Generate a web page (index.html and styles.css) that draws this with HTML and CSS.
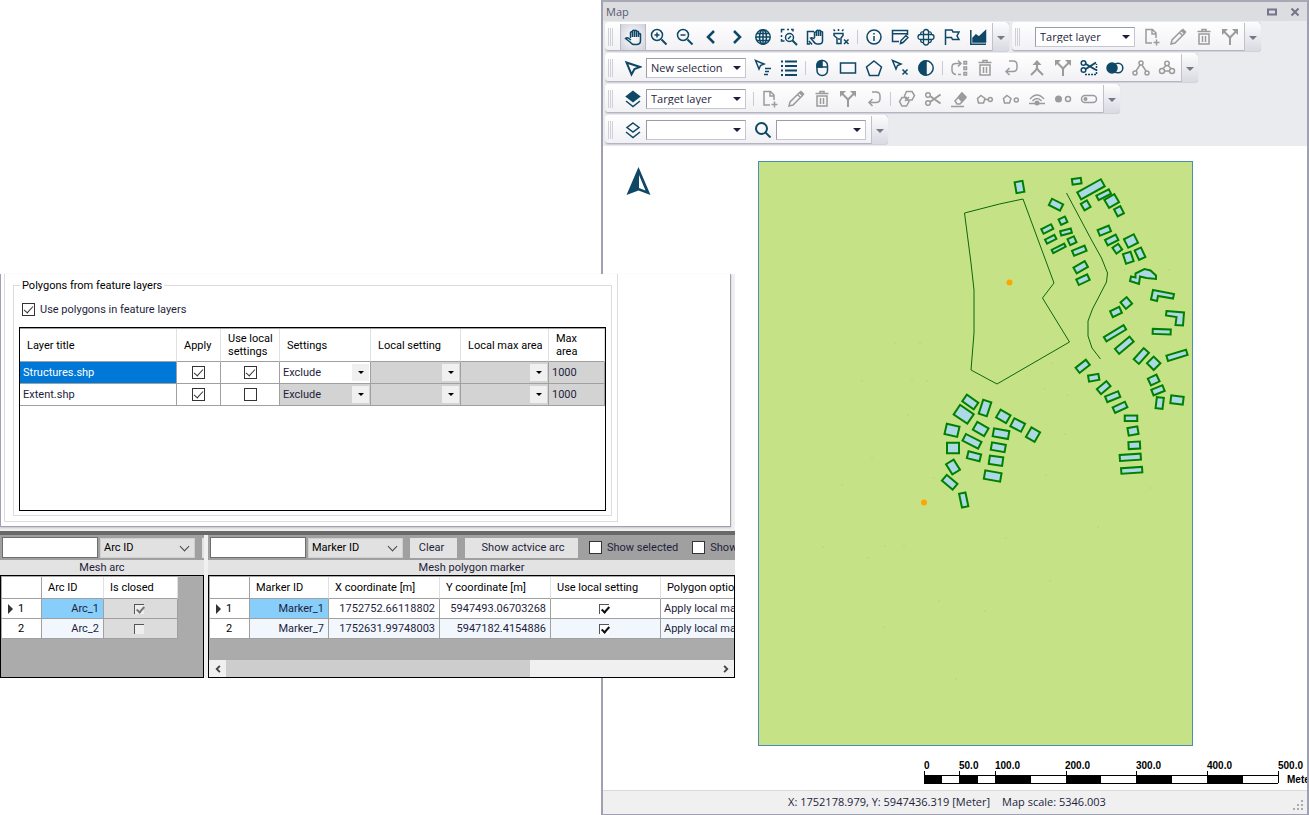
FILE: index.html
```html
<!DOCTYPE html>
<html lang="en">
<head>
<meta charset="utf-8">
<title>Map</title>
<link rel="stylesheet" href="styles.css">
</head>
<body>
<svg class="symbols" aria-hidden="true">
  <symbol id="hand" viewBox="0 0 18 18"><path d="M6.500 10V4.500q1-1.500 2 0V3q1-1.500 2 0q1-1.500 2 0v1q1-1.500 2 0V6q1.500-1 2 0v6.500q0 4-4 4h-2.500q-2 0-4-2.500L1.500 10.500q1-1 2.500-.5l3 2M8.500 4v5M10.500 3v6M12.500 4v5M14.500 6v3"/></symbol>
  <symbol id="zoomin" viewBox="0 0 18 18"><circle cx="7" cy="7" r="5.500"/><path d="M4.500 7h5M7 4.500v5"/><path class="thick" d="M11.500 11.500l5 5"/></symbol>
  <symbol id="zoomout" viewBox="0 0 18 18"><circle cx="7" cy="7" r="5.500"/><path d="M4.500 7h5"/><path class="thick" d="M11.500 11.500l5 5"/></symbol>
  <symbol id="prev" viewBox="0 0 18 18"><path class="bold" d="M12 3L6 9l6 6"/></symbol>
  <symbol id="next" viewBox="0 0 18 18"><path class="bold" d="M6 3l6 6-6 6"/></symbol>
  <symbol id="globe" viewBox="0 0 18 18"><circle cx="9" cy="9" r="7.200"/><ellipse cx="9" cy="9" rx="3.500" ry="7.200"/><path d="M9 2v14M2 9h14M3 5.500h12M3 12.500h12"/></symbol>
  <symbol id="zoomarea" viewBox="0 0 18 18"><path d="M1.500 4.500v-3h3M7 1.500h2M11 1.500h2v2M1.500 7v2M1.500 11v2h3"/><circle cx="9.500" cy="9.500" r="4"/><path d="M8 11l3-3"/><path class="thick" d="M12.500 12.500l4.500 4.500"/></symbol>
  <symbol id="panmap" viewBox="0 0 18 18"><path d="M8 3.500H1.500V16H4M3 13l3 3.500M8.500 10V4.500q1-1 2 0V3q1-1.500 2 0q1-1.500 2 0v1q1-1 2 0V13q0 3-3.500 3H11q-2 0-3.500-2.500L4.500 10q1.500-1 4 1M10.500 4.500V8M12.500 3v5M14.500 4v4"/></symbol>
  <symbol id="flashx" viewBox="0 0 18 18"><path d="M2 5.500h9v2L9 10v5.500H5V10L2 7.500zM7 10v2M6.500 3V1M3 3L1.500 1.500M10 3l1.500-1.500M12 11.500l4.500 4.500M16.500 11.500L12 16"/></symbol>
  <symbol id="info" viewBox="0 0 18 18"><circle cx="9" cy="9" r="7"/><path d="M9 8v5M9 5v1.600"/></symbol>
  <symbol id="formedit" viewBox="0 0 18 18"><path d="M16.500 7V2.500h-15v11H8M1.500 5.800h15M9.500 15.500l.5-3 5-5 2 2-5 5z"/></symbol>
  <symbol id="cluster" viewBox="0 0 18 18"><path class="fine" d="M6.500 4q0-2.500 2.500-2.500T11.500 4q3-1 3 2.500 2.500 0 2.500 2.500t-2.500 2.500q0 3.500-3 3 0 2.500-2.500 2.500t-2.500-2.500q-3 .500-3-3Q1 11.500 1 9t2.500-2.500Q3.500 3 6.500 4zM6.500 4v10.500M11.500 4v10.500M3.500 6.500h11M3.500 11.500h11"/></symbol>
  <symbol id="flag" viewBox="0 0 18 18"><path d="M2.500 17V2h6.500l1 2h6l-2 4 2 3.500H9.500L8.500 9.500h-6"/></symbol>
  <symbol id="chart" viewBox="0 0 18 18"><path d="M1.800 2v14.200H17"/><path class="solid" d="M4 14V10l3-3 3 2 6.500-6V14z"/></symbol>
  <symbol id="newfile" viewBox="0 0 18 18"><path d="M9 15H3V1.500h6.500L13 5v5M9 2v4h4M13.500 11.500v6M10.500 14.500h6"/></symbol>
  <symbol id="pencil" viewBox="0 0 18 18"><path d="M2 16l1-4 9.500-9.500 3 3L6 15zM10.500 4.500l3 3"/><path class="solid" d="M13 2.500l1-1 2.500 2.500-1 1z"/></symbol>
  <symbol id="trash" viewBox="0 0 18 18"><path d="M2.500 3.500h13M7 3V1.500h4V3M4 6h10v10H4zM7.500 8v6M10.500 8v6"/></symbol>
  <symbol id="split" viewBox="0 0 18 18"><path class="thick" d="M9 17v-6q0-1.500-1-2.500L3 3.500M9 11q0-1.500 1-2.500l5-5"/><path class="head" d="M1 1h6L1 7zM17 1h-6l6 6z"/></symbol>
  <symbol id="cursor" viewBox="0 0 18 18"><path class="thick" d="M2.500 3.500L16 8l-5.500 2L7.500 15.500z"/></symbol>
  <symbol id="cursorlist" viewBox="0 0 18 18"><path d="M1.500 1.500L10 5 6.500 6.500 5 10zM11 9.500h6M11 12.500h4M10 15.500h4"/></symbol>
  <symbol id="list" viewBox="0 0 18 18"><path class="thick" d="M1 2.500h2M5 2.500h12M1 7h2M5 7h12M1 11.500h2M5 11.500h12M1 16h2M5 16h12"/></symbol>
  <symbol id="mouse" viewBox="0 0 18 18"><rect x="4" y="1.500" width="10.500" height="15" rx="5"/><path d="M4 8h10.500"/><path class="solid" d="M4 8V6q0-4 5-4.500V8z"/></symbol>
  <symbol id="rect" viewBox="0 0 18 18"><rect x="1.500" y="4" width="15" height="10"/></symbol>
  <symbol id="pentagon" viewBox="0 0 18 18"><path d="M9 2l7.500 6-3 8.500h-9L1.500 8z"/></symbol>
  <symbol id="cursorx" viewBox="0 0 18 18"><path d="M1.500 1.500L10 5 6.500 6.500 5 10zM11.500 10.500l5 5M16.500 10.500l-5 5"/></symbol>
  <symbol id="contrast" viewBox="0 0 18 18"><circle cx="9" cy="9" r="7.200"/><path class="solid" d="M9 2a7 7 0 0 0 0 14z"/></symbol>
  <symbol id="rotatelist" viewBox="0 0 18 18"><path d="M6 15.500q-4-.500-4-4.500V8q0-3.500 4-3.500h5M8 1.500l3 3-3 3M14 2.500h2.500V5H14zM14 8h2.500v2.500H14zM14 13.500h2.500V16H14zM8 15.500h3"/></symbol>
  <symbol id="undo" viewBox="0 0 18 18"><path d="M7 2h4q4 0 4 4v2.500q0 4-4 4H4M7.500 9L4 12.500 7.500 16"/></symbol>
  <symbol id="merge" viewBox="0 0 18 18"><path class="thick" d="M9 3v5q0 2-1.500 3.500L3 16M9 8q0 2 1.500 3.500L15 16"/><path class="head" d="M4.500 6L9 1l4.500 5z"/></symbol>
  <symbol id="scissors" viewBox="0 0 18 18"><circle cx="4" cy="5" r="2.300"/><circle cx="4" cy="13" r="2.300"/><path class="thick" d="M6 6l10.500 7.500M6 12l10.500-7.500"/></symbol>
  <symbol id="clip" viewBox="0 0 18 18"><circle cx="3.500" cy="4" r="2.300"/><circle cx="3.500" cy="11" r="2.300"/><path class="thick" d="M5 4.500l11 6.500M5 10.500l11-7"/><path stroke-dasharray="2 1" d="M5 15.500h11.500V5"/></symbol>
  <symbol id="overlap" viewBox="0 0 18 18"><circle class="solid" cx="6" cy="9" r="5"/><circle cx="12" cy="9" r="4.800"/></symbol>
  <symbol id="nodes" viewBox="0 0 18 18"><circle cx="9" cy="4" r="2"/><circle cx="3" cy="14" r="2"/><circle cx="15" cy="14" r="2"/><path d="M8 6l-4 6M10 6l4 6"/></symbol>
  <symbol id="nodes2" viewBox="0 0 18 18"><circle cx="9" cy="4.500" r="2.200"/><circle cx="4" cy="12" r="2.500"/><circle cx="14" cy="12" r="2.500"/><path d="M8 6.500l-3 3M10 6.500l3 3M6.500 12h5"/></symbol>
  <symbol id="layers" viewBox="0 0 18 18"><path class="solid" d="M9 1.500l6.500 5L9 11.500 2.500 6.500z"/><path d="M2 11l7 5.500 7-5.500"/></symbol>
  <symbol id="layersline" viewBox="0 0 18 18"><path d="M9 2l6 4.500L9 11 3 6.500zM2 11l7 5.500 7-5.500"/></symbol>
  <symbol id="search" viewBox="0 0 18 18"><circle class="thick" cx="7.500" cy="7.500" r="5.500"/><path class="thick" d="M11.500 11.500l5 5"/></symbol>
  <symbol id="link" viewBox="0 0 18 18"><path d="M8.500 1.500h5.500l2.500 4-2.500 4.500H8.500L6.500 6zM4 7.500h4.500l2.500 4-2.500 4.500H4l-2.500-4.500zM7 11l4-4"/></symbol>
  <symbol id="eraser" viewBox="0 0 18 18"><path d="M1 16.500h13M5 11l6-7 4.500 4-5.500 6H7z"/><path class="solid" d="M8.500 7.500l3.500-4.500 4 4-4 4.500z"/></symbol>
  <symbol id="polynode" viewBox="0 0 18 18"><path d="M5 5.500l4 3-1.500 4.500h-5L1.500 8.500zM9 9.500h3"/><circle cx="14.300" cy="9.500" r="2"/></symbol>
  <symbol id="polydot" viewBox="0 0 18 18"><path d="M5 5.500l4 3-1.500 4.500h-5L1.500 8.500z"/><circle cx="14.300" cy="10" r="2"/></symbol>
  <symbol id="radar" viewBox="0 0 18 18"><path d="M1 13.500h16M2 9q7-8 14 0M4.500 11q4.500-5 9 0"/><circle class="head" cx="9" cy="13" r="2.500"/></symbol>
  <symbol id="dots" viewBox="0 0 18 18"><circle class="head" cx="4.500" cy="9" r="3.500"/><circle cx="14" cy="9" r="2.500"/></symbol>
  <symbol id="toggle" viewBox="0 0 18 18"><rect x="1.500" y="5.500" width="15" height="7" rx="3.500"/><circle class="head" cx="5.500" cy="9" r="2"/></symbol>
</svg>

<main class="desktop">
<section class="map-window" aria-label="Map">
  <header class="titlebar">
    <h1>Map</h1>
    <button class="winbtn" aria-label="Maximize"><svg viewBox="0 0 10 10"><path d="M1 2.500h8v5H1z"/></svg></button>
    <button class="winbtn" aria-label="Close"><svg viewBox="0 0 10 10"><path d="M1.500 1.500l7 7M8.500 1.500l-7 7"/></svg></button>
  </header>
  <div class="toolbars">
    <div class="toolrow">
      <div class="toolbar">
        <i class="grip"></i>
        <button class="tool active" aria-label="Pan"><svg><use href="#hand"/></svg></button>
        <button class="tool" aria-label="Zoom in"><svg><use href="#zoomin"/></svg></button>
        <button class="tool" aria-label="Zoom out"><svg><use href="#zoomout"/></svg></button>
        <button class="tool" aria-label="Previous"><svg><use href="#prev"/></svg></button>
        <button class="tool" aria-label="Next"><svg><use href="#next"/></svg></button>
        <button class="tool" aria-label="Full extent"><svg><use href="#globe"/></svg></button>
        <button class="tool" aria-label="Zoom to selection"><svg><use href="#zoomarea"/></svg></button>
        <button class="tool" aria-label="Pan to selection"><svg><use href="#panmap"/></svg></button>
        <button class="tool" aria-label="Clear highlight"><svg><use href="#flashx"/></svg></button>
        <i class="sep"></i>
        <button class="tool" aria-label="Info"><svg><use href="#info"/></svg></button>
        <button class="tool" aria-label="Edit attributes"><svg><use href="#formedit"/></svg></button>
        <button class="tool" aria-label="Cluster"><svg><use href="#cluster"/></svg></button>
        <button class="tool" aria-label="Flag"><svg><use href="#flag"/></svg></button>
        <button class="tool" aria-label="Profile"><svg><use href="#chart"/></svg></button>
        <button class="more" aria-label="More"></button>
      </div>
      <div class="toolbar">
        <i class="grip"></i>
        <span class="combo indent"><select aria-label="Edit target"><option>Target layer</option></select></span>
        <button class="tool off" aria-label="New"><svg><use href="#newfile"/></svg></button>
        <button class="tool off" aria-label="Edit"><svg><use href="#pencil"/></svg></button>
        <button class="tool off" aria-label="Delete"><svg><use href="#trash"/></svg></button>
        <button class="tool off" aria-label="Split"><svg><use href="#split"/></svg></button>
        <button class="more" aria-label="More"></button>
      </div>
    </div>
    <div class="toolrow">
      <div class="toolbar">
        <i class="grip"></i>
        <button class="tool" aria-label="Select"><svg><use href="#cursor"/></svg></button>
        <span class="combo"><select aria-label="Selection mode"><option>New selection</option></select></span>
        <button class="tool" aria-label="Select by attribute"><svg><use href="#cursorlist"/></svg></button>
        <button class="tool" aria-label="Selection list"><svg><use href="#list"/></svg></button>
        <i class="sep"></i>
        <button class="tool" aria-label="Click select"><svg><use href="#mouse"/></svg></button>
        <button class="tool" aria-label="Rectangle select"><svg><use href="#rect"/></svg></button>
        <button class="tool" aria-label="Polygon select"><svg><use href="#pentagon"/></svg></button>
        <button class="tool" aria-label="Clear selection"><svg><use href="#cursorx"/></svg></button>
        <button class="tool" aria-label="Invert selection"><svg><use href="#contrast"/></svg></button>
        <i class="sep"></i>
        <button class="tool off" aria-label="Rotate"><svg><use href="#rotatelist"/></svg></button>
        <button class="tool off" aria-label="Delete"><svg><use href="#trash"/></svg></button>
        <button class="tool off" aria-label="Undo"><svg><use href="#undo"/></svg></button>
        <button class="tool off" aria-label="Merge"><svg><use href="#merge"/></svg></button>
        <button class="tool off" aria-label="Split"><svg><use href="#split"/></svg></button>
        <button class="tool" aria-label="Clip"><svg><use href="#clip"/></svg></button>
        <button class="tool" aria-label="Intersect"><svg><use href="#overlap"/></svg></button>
        <button class="tool off" aria-label="Nodes"><svg><use href="#nodes"/></svg></button>
        <button class="tool off" aria-label="Join nodes"><svg><use href="#nodes2"/></svg></button>
        <button class="more" aria-label="More"></button>
      </div>
    </div>
    <div class="toolrow">
      <div class="toolbar">
        <i class="grip"></i>
        <button class="tool" aria-label="Layers"><svg><use href="#layers"/></svg></button>
        <span class="combo"><select aria-label="Target layer"><option>Target layer</option></select></span>
        <i class="sep"></i>
        <button class="tool off" aria-label="New"><svg><use href="#newfile"/></svg></button>
        <button class="tool off" aria-label="Edit"><svg><use href="#pencil"/></svg></button>
        <button class="tool off" aria-label="Delete"><svg><use href="#trash"/></svg></button>
        <button class="tool off" aria-label="Split"><svg><use href="#split"/></svg></button>
        <button class="tool off" aria-label="Undo"><svg><use href="#undo"/></svg></button>
        <i class="sep"></i>
        <button class="tool off" aria-label="Link"><svg><use href="#link"/></svg></button>
        <button class="tool off" aria-label="Cut"><svg><use href="#scissors"/></svg></button>
        <button class="tool off" aria-label="Erase"><svg><use href="#eraser"/></svg></button>
        <button class="tool off" aria-label="Connect polygon"><svg><use href="#polynode"/></svg></button>
        <button class="tool off" aria-label="Polygon to point"><svg><use href="#polydot"/></svg></button>
        <button class="tool off" aria-label="Buffer"><svg><use href="#radar"/></svg></button>
        <button class="tool off" aria-label="Points"><svg><use href="#dots"/></svg></button>
        <button class="tool off" aria-label="Toggle"><svg><use href="#toggle"/></svg></button>
        <button class="more" aria-label="More"></button>
      </div>
    </div>
    <div class="toolrow">
      <div class="toolbar">
        <i class="grip"></i>
        <button class="tool" aria-label="Layer"><svg><use href="#layersline"/></svg></button>
        <span class="combo"><select aria-label="Layer"><option></option></select></span>
        <button class="tool" aria-label="Search"><svg><use href="#search"/></svg></button>
        <span class="combo short"><select aria-label="Search field"><option></option></select></span>
        <button class="more" aria-label="More"></button>
      </div>
    </div>
  </div>
  <div class="canvas">
    <svg class="map" viewBox="603 146 704 644" preserveAspectRatio="xMinYMin meet">
      <path class="north" d="M638.500 167l12 28-12-4.500-12 4.500z"/>
      <path class="north-light" d="M639 175v13l6.500 2.500z"/>
      <rect class="extent" x="758.500" y="161.500" width="434" height="584"/>
      <path class="arc" d="M964.500 213l35-9 23.500-5 31 84-11.500 15 27 44L997 384l-26-14 3-37v-43l-3-27z"/>
      <path class="arc" d="M1066.500 193l25 47 10 18 6 15-1 9-14 27-4.500 12v15l4 12 8.500 11"/>
      <g class="speck" id="specks"></g>
      <g class="building" id="buildings">
        <path d="M1135.500 273.500l9-4.500 6 1.500 5.500 5v3.500l-9.500-1-6.500-1.500-1 7.500-9-3 1-4.500 4.500 1z"/>
        <path d="M1153 290l21 4-1 4.500-15-2.500-1 5-6-1.500z"/>
        <path d="M1166.500 311l17.500 1.500-1 13-7.500-.5 1-8-10.500-1.500z"/>
      </g>
      <circle class="marker" cx="1009.500" cy="282.500" r="3"/>
      <circle class="marker" cx="924" cy="502.500" r="3"/>
      <g class="scale">
        <path class="scale-line" d="M924.500 771v12M959.500 771v4M995.500 771v4M1066.500 771v4M1136.500 771v4M1207.500 771v4M1278.500 771v12M924 775.500h354M924 783.500h354"/>
        <path class="scale-block" d="M924 775h18v8h-18zM959 775h19v8h-19zM995 775h36v8h-36zM1066 775h35v8h-35zM1136 775h36v8h-36zM1207 775h36v8h-36z"/>
        <text x="924" y="769">0</text><text x="959" y="769">50.0</text><text x="995" y="769">100.0</text><text x="1065" y="769">200.0</text><text x="1136" y="769">300.0</text><text x="1207" y="769">400.0</text><text x="1278" y="769">500.0</text><text x="1287" y="783">Meter</text>
      </g>
    </svg>
  </div>
  <footer class="status">
    <span>X: 1752178.979, Y: 5947436.319 [Meter]</span><span>Map scale: 5346.003</span>
    <svg class="resize" viewBox="0 0 12 12"><path d="M8 0h2v2H8zM4 4h2v2H4zM8 4h2v2H8zM0 8h2v2H0zM4 8h2v2H4zM8 8h2v2H8z"/></svg>
  </footer>
</section>

<section class="settings-window" aria-label="Mesh settings">
  <div class="upper">
    <div class="sheet">
      <fieldset class="group">
        <legend>Polygons from feature layers</legend>
        <label class="check-label"><input class="check" type="checkbox" checked>Use polygons in feature layers</label>
        <div class="listbox">
          <table class="layers">
            <colgroup><col class="w157"><col class="w44"><col class="w59"><col class="w91"><col class="w90"><col class="w88"><col></colgroup>
            <thead><tr><th>Layer title</th><th>Apply</th><th>Use local settings</th><th>Settings</th><th>Local setting</th><th>Local max area</th><th>Max area</th></tr></thead>
            <tbody>
              <tr><td class="selected">Structures.shp</td><td class="mid"><input class="check" type="checkbox" aria-label="Apply Structures.shp" checked></td><td class="mid"><input class="check" type="checkbox" aria-label="Local settings Structures.shp" checked></td><td><span class="cell-combo"><select aria-label="Settings"><option>Exclude</option></select></span></td><td class="gray"><span class="cell-combo"><select aria-label="Local setting"><option></option></select></span></td><td class="gray"><span class="cell-combo"><select aria-label="Local max area"><option></option></select></span></td><td class="gray">1000</td></tr>
              <tr><td>Extent.shp</td><td class="mid"><input class="check" type="checkbox" aria-label="Apply Extent.shp" checked></td><td class="mid"><input class="check" type="checkbox" aria-label="Local settings Extent.shp"></td><td class="gray"><span class="cell-combo"><select aria-label="Settings"><option>Exclude</option></select></span></td><td class="gray"><span class="cell-combo"><select aria-label="Local setting"><option></option></select></span></td><td class="gray"><span class="cell-combo"><select aria-label="Local max area"><option></option></select></span></td><td class="gray">1000</td></tr>
            </tbody>
          </table>
        </div>
      </fieldset>
    </div>
  </div>
  <div class="lower">
    <div class="pane arc-pane">
      <div class="filter">
        <input class="textbox" type="text" aria-label="Filter arcs">
        <span class="flat-combo"><select aria-label="Arc filter field"><option>Arc ID</option></select></span>
        <i class="cut"></i>
      </div>
      <h2>Mesh arc</h2>
      <div class="gridbox">
        <table class="grid">
          <colgroup><col class="w40"><col class="w62"><col class="w74"></colgroup>
          <thead><tr><th></th><th>Arc ID</th><th>Is closed</th></tr></thead>
          <tbody>
            <tr><th class="current">1</th><td class="picked">Arc_1</td><td class="dim mid"><input class="tick" type="checkbox" aria-label="Arc_1 closed" checked disabled></td></tr>
            <tr><th>2</th><td>Arc_2</td><td class="dim mid"><input class="tick" type="checkbox" aria-label="Arc_2 closed" disabled></td></tr>
          </tbody>
        </table>
      </div>
    </div>
    <div class="pane marker-pane">
      <div class="filter">
        <input class="textbox" type="text" aria-label="Filter markers">
        <span class="flat-combo"><select aria-label="Marker filter field"><option>Marker ID</option></select></span>
        <button class="push clear">Clear</button>
        <button class="push">Show actvice arc</button>
        <label class="check-label"><input class="check" type="checkbox">Show selected</label>
        <label class="check-label"><input class="check" type="checkbox">Show</label>
      </div>
      <h2>Mesh polygon marker</h2>
      <div class="gridbox">
        <table class="grid wide">
          <colgroup><col class="w40"><col class="w79"><col class="w111"><col class="w111"><col class="w110"><col class="w110"></colgroup>
          <thead><tr><th></th><th>Marker ID</th><th>X coordinate [m]</th><th>Y coordinate [m]</th><th>Use local setting</th><th>Polygon option</th></tr></thead>
          <tbody>
            <tr><th class="current">1</th><td class="picked">Marker_1</td><td>1752752.66118802</td><td>5947493.06703268</td><td class="mid"><input class="tick" type="checkbox" aria-label="Marker_1 local" checked></td><td class="left">Apply local max</td></tr>
            <tr><th>2</th><td>Marker_7</td><td>1752631.99748003</td><td>5947182.4154886</td><td class="mid"><input class="tick" type="checkbox" aria-label="Marker_7 local" checked></td><td class="left">Apply local max</td></tr>
          </tbody>
        </table>
        <div class="scrollbar">
          <button class="scroll-arrow" aria-label="Scroll left"><svg viewBox="0 0 8 8"><path d="M5.500 1.500L3 4l2.500 2.500"/></svg></button>
          <div class="track"><div class="thumb"></div></div>
          <button class="scroll-arrow" aria-label="Scroll right"><svg viewBox="0 0 8 8"><path d="M2.500 1.500L5 4 2.500 6.500"/></svg></button>
        </div>
      </div>
    </div>
  </div>
</section>
</main>
<script src="buildings.js"></script>
</body>
</html>
```
FILE: buildings.js
```js
// centre x, centre y, width, height, rotation in degrees
const footprints = [
  [1019.5,187,8,11,-10],[1076.7,181.3,9,5.5,-8],[1091,189.3,27,8,-29],[1103.7,194.7,14,5,-27],[1111.7,201,11.5,9.5,-30],
  [1085.7,205.3,7,7.5,-30],[1119,211.3,7,8,-27],[1056,204.7,12.5,7,27],[1063,220.7,7,6,-25],[1047.3,229,11,5,-27],
  [1066,232,11,4.5,-15],[1050.7,239.3,10.5,4.5,-27],[1072,240.7,7,6.5,-25],[1058.7,248.3,14,3.5,-27],[1079.3,250.7,13.5,5.5,-22],
  [1080.7,267.3,13,6.5,-30],[1083,279.7,12,6,-25],[1104.3,230.7,12,6,-22],[1111.7,240,12,6,-27],[1117.3,248.7,7,7,-35],
  [1131,241,11,9.5,-27],[1128.3,257.7,8,10,-18],[1140,253.7,7,10.5,-25],[1126.3,303,8,8.5,-40],[1116,312,10,6.5,-25],
  [1115,333.3,23,5,-31],[1124.3,345.3,19,6.5,-40],[1141.3,356,15,7,-48],[1153.7,363.3,9.5,9.5,-45],[1161.7,331.7,18,5,2],
  [1177,355.3,20.5,5.5,-17],[1153.7,380,9.5,7.5,-25],[1158,390.3,12,6,-22],[1159.7,403,7,11,7],[1177,400,12.5,8,7],
  [1082.7,366.3,13,6.5,-38],[1093.7,377.7,10.5,6,-10],[1103.7,387.7,12.5,6.5,-40],[1112.7,396.7,14,6,-22],[1120,407.3,13.5,6,-25],
  [1131,418.3,12.5,5.5,0],[1133,431,10,7.5,-10],[1134.3,445.3,11.5,7,-3],[1130.3,457.3,21,6,-4],[1131.7,470.3,21,5.5,-4],
  [970.3,402,14,8,35],[963.7,414.3,16.5,11.5,34],[985,408,8.5,14.5,18],[1003.3,416.3,11.5,9,30],[1017.7,425,12,9,27],
  [1033,434.7,10,11,30],[980.7,429,13,9,30],[952,430.3,13,10.5,13],[1001,433.7,15.5,8,10],[972,441.3,17.5,7.5,27],
  [953,448,12,10.5,0],[974,456.3,13,7,14],[998.3,447.3,14,7.5,10],[996,460.7,13.5,8.5,8],[992.7,476,16.5,8.5,10],
  [953,467,9,12,-32],[949.7,482.3,14,7.5,40],[963.7,500,6.5,14,-12]
];
const specks = [[912,379],[927,381],[895,343],[920,343],[862,381],[1045,389],[1067,395],[872,458],[842,485],[934,478],[1046,475],[904,546],[823,547],[868,558],[885,546],[1006,538],[1050,581],[939,601],[985,611],[884,627],[872,640],[912,640],[956,679],[1150,488],[1065,434],[1125,270],[1169,270],[908,415],[1052,363],[1098,527]];
const NS = 'http://www.w3.org/2000/svg';
function addRect(parent, cx, cy, w, h, angle) {
  const r = document.createElementNS(NS, 'rect');
  r.setAttribute('x', cx - w / 2);
  r.setAttribute('y', cy - h / 2);
  r.setAttribute('width', w);
  r.setAttribute('height', h);
  if (angle) r.setAttribute('transform', `rotate(${angle} ${cx} ${cy})`);
  parent.appendChild(r);
}
footprints.forEach(f => addRect(document.getElementById('buildings'), ...f));
specks.forEach(([x, y]) => addRect(document.getElementById('specks'), x, y, 1, 1, 0));
```
FILE: styles.css
```css
* { box-sizing: border-box; }
body { margin: 0; background: #fff; color: #1e1e3c; font: 11px/13px Roboto, sans-serif; }
button, select, input { font: inherit; color: inherit; margin: 0; padding: 0; border: 0; border-radius: 0; background: none; }
select { appearance: none; display: block; width: 100%; height: 100%; }
h1, h2 { margin: 0; font: inherit; }
.symbols { display: none; }
.desktop { position: relative; min-height: 100vh; overflow: hidden; }

.map-window { display: flex; flex-direction: column; height: 100vh; margin-left: 601px; border: 2px solid #a0a1af; border-top-color: #a8a9b4; border-bottom-width: 1px; background: #fff; font-family: "Open Sans", sans-serif; }
.titlebar { display: flex; align-items: center; gap: 13px; height: 19px; padding: 0 7px 0 3px; background: #dcdde1; color: #5b5b6e; }
.titlebar h1 { flex: 1; }
.winbtn { width: 10px; height: 10px; }
.winbtn svg { display: block; fill: none; stroke: #74748a; stroke-width: 2; }
.toolbars { display: flex; flex-direction: column; gap: 2px; padding: 1px 2px 2px; background: #eaebef; height: 125px; }
.toolrow { display: flex; gap: 3px; }
.toolbar { display: flex; align-items: center; height: 29px; border-radius: 3px; background: linear-gradient(#fff, #f1f1f5); box-shadow: inset 0 -1px #b4b5c0, inset -1px 0 #c6c7d0, 0 1px 1px #cfd0d8; }
.grip { width: 6px; height: 18px; margin: 0 6px 0 3px; background: repeating-linear-gradient(90deg, #cfd0d8 0 1px, transparent 1px 2px); }
.tool { display: grid; place-items: center; width: 26px; height: 26px; color: #0f4766; }
.tool svg { width: 18px; height: 18px; fill: none; stroke: currentColor; stroke-width: 1.500; }
.fine { stroke-width: 1.300; }
.thick { stroke-width: 2; }
.bold { stroke-width: 2.500; }
.solid { fill: currentColor; }
.head { fill: currentColor; stroke: none; }
.tool.off { color: #9b9b9b; }
.tool.active { background: radial-gradient(#fff, #cfd0da); border: 1px solid #b9bac6; border-width: 0 1px; }
.sep { width: 1px; height: 14px; margin: 0 3px; background: #c9cad2; }
.combo { position: relative; width: 100px; height: 20px; margin-right: 4px; border: 1px solid #c5c6d0; border-top-color: #9a9bab; border-left-color: #9a9bab; background: #fff; }
.combo.short { width: 90px; }
.combo.indent { margin-left: 8px; }
.combo select { padding-left: 4px; }
.combo::after, .cell-combo::after, .more::after { content: ""; position: absolute; right: 4px; top: 7px; border: 4px solid transparent; border-top-color: #1e1e3c; border-bottom: 0; }
.more { position: relative; width: 17px; height: 28px; margin-left: 1px; border-left: 1px solid #c0c1cb; border-radius: 0 3px 3px 0; background: linear-gradient(#fcfcfd, #d9dae2); }
.more::after { top: 13px; border-top-color: #777787; }
.canvas { flex: 1; min-height: 0; overflow: hidden; }
.map { display: block; width: 100%; height: 100%; }
.north { fill: #0f4766; }
.north-light { fill: #fff; }
.extent { fill: #c5e386; stroke: #4c8db6; }
.arc { fill: none; stroke: #0d660d; }
.building { fill: #add8e6; stroke: #008000; stroke-width: 2; }
.marker { fill: #ffa500; }
.speck { fill: #94b070; opacity: .6; }
.scale-line { stroke: #000; stroke-width: 1; }
.scale text { fill: #000; font: bold 10px "Liberation Sans", Arial, sans-serif; }
.status { position: relative; display: flex; justify-content: center; align-items: center; gap: 12px; height: 24px; padding: 0 16px 3px 0; background: #f0f0f0; border-top: 1px solid #d9d9d9; }
.resize { position: absolute; right: 2px; bottom: 2px; width: 12px; height: 12px; fill: #a9a9b0; }

.settings-window { position: absolute; left: 0; top: 274px; width: 735px; background: #f0f0f0; }
.upper { height: 253px; margin-right: 4px; padding: 0 0 4px 4px; border: 1px solid #a0a0b4; border-top: 0; background: #fff; box-shadow: 0 1px 2px #c4c4c8; }
.sheet { width: 614px; height: 248px; padding: 5px 5px 5px 8px; border: 1px solid #dcdcdc; border-top: 0; margin-left: -1px; }
.group { height: 237px; margin: 0; padding: 11px 5px 4px; border: 1px solid #dcdcdc; min-width: 0; }
.group legend { padding: 0 2px; margin-left: 1px; color: #000; }
.check-label { display: flex; align-items: center; gap: 5px; white-space: nowrap; }
.group .check-label { padding-left: 3px; }
.check { appearance: none; position: relative; flex: none; width: 13px; height: 13px; border: 1px solid #333; background: #fff; }
.check:checked::after { content: ""; position: absolute; left: 3px; top: 0; width: 4px; height: 8px; border: solid #333; border-width: 0 1px 1px 0; transform: rotate(42deg); }
.listbox { height: 184px; margin-top: 11px; border: 1px solid #000; overflow: hidden; }
table { border-collapse: separate; border-spacing: 0; table-layout: fixed; }
th, td { padding: 0; font-weight: normal; text-align: left; white-space: nowrap; overflow: hidden; }
.layers { width: 100%; border-top: 1px solid #a0a0a0; }
.layers th { height: 33px; padding: 0 5px 0 7px; border-right: 1px solid #e0e0e0; border-bottom: 1px solid #a0a0a0; color: #000; white-space: normal; }
.layers td { height: 22px; padding-left: 3px; border: solid #a0a0a0; border-width: 0 1px 1px 0; }
.layers td.selected { background: #0078d7; color: #fff; }
.layers td.gray { background: #d3d3d3; }
td.mid, .layers td.mid { text-align: center; padding: 0; }
.mid .check { display: block; margin: 0 auto; }
.cell-combo { position: relative; display: block; height: 19px; }
.cell-combo::before { content: ""; position: absolute; right: 1px; top: 1px; width: 17px; height: 17px; background: #f0f0f0; pointer-events: none; }
.cell-combo::after { right: 6px; top: 8px; border-width: 3px; border-bottom: 0; border-top-color: #000; }
.w157 { width: 157px; } .w44 { width: 44px; } .w59 { width: 59px; } .w91 { width: 91px; } .w90 { width: 90px; } .w88 { width: 88px; }
.w40 { width: 40px; } .w62 { width: 62px; } .w74 { width: 74px; } .w79 { width: 79px; } .w110 { width: 110px; } .w111 { width: 111px; }

.lower { position: relative; display: flex; gap: 4px; margin-top: 4px; border-top: 4px solid #696969; }
.pane { overflow: hidden; min-width: 0; }
.arc-pane { width: 204px; }
.marker-pane { flex: 1; }
.filter { display: flex; align-items: center; height: 25px; padding: 0 0 0 2px; background: #a0a0a0; overflow: hidden; }
.textbox { flex: none; width: 96px; height: 21px; border: 1px solid #6e6e6e; background: #fff; }
.flat-combo { position: relative; flex: none; width: 95px; height: 20px; margin: 0 7px 0 2px; border: 1px solid #cfcfcf; background: #e1e1e1; color: #000; }
.flat-combo select { padding-left: 3px; }
.flat-combo::after { content: ""; position: absolute; right: 6px; top: 4px; width: 6px; height: 6px; border: solid #444; border-width: 0 1px 1px 0; transform: rotate(45deg); }
.cut { width: 2px; height: 20px; background: #e1e1e1; }
.push { flex: none; width: 113px; height: 20px; margin-right: 11px; padding-left: 3px; background: #e3e3e3; }
.push.clear { width: 47px; margin-right: 8px; padding: 0 4px 0 0; }
.filter .check-label { margin-right: 14px; }
.pane h2 { height: 15px; line-height: 15px; background: #e3e3e3; text-align: center; }
.gridbox { height: 103px; padding: 1px; border: 1px solid #000; background: #ababab; overflow: hidden; }
.grid { width: 176px; }
.grid.wide { width: 561px; }
.grid th, .grid td { height: 20px; border: solid #a0a0a0; border-width: 0 1px 1px 0; background: #fff; color: #000; }
.grid thead th { height: 22px; padding-left: 6px; border-right-color: #e0e0e0; }
.grid thead th:first-child { border-right-color: #a0a0a0; }
.grid tbody th { position: relative; padding-left: 16px; }
.grid td { padding-right: 4px; text-align: right; color: #1e1e3c; }
.grid tr:nth-child(2) td { background: #f2f7fd; }
.grid td.picked { background: #87cefa; }
.grid tr td.dim { background: #dcdcdc; }
.grid td.left { text-align: left; padding: 0 0 0 3px; }
.current::before { content: ""; position: absolute; left: 6px; top: 5px; border: 5px solid transparent; border-left-color: #333; border-right: 0; }
.tick { appearance: none; display: block; position: relative; width: 10px; height: 10px; margin: 0 auto; border: solid #555; border-width: 1px 0 0 1px; background: #fff; }
.tick:disabled { background: #eee; }
.tick:checked::after { content: ""; position: absolute; left: 3px; top: 0; width: 3px; height: 6px; border: solid #111; border-width: 0 2px 2px 0; transform: rotate(42deg); }
.tick:disabled:checked::after { border-color: #777; }
.scrollbar { display: flex; height: 17px; margin: 21px -1px 0; background: #f0f0f0; }
.scroll-arrow { width: 17px; height: 17px; display: grid; place-items: center; }
.scroll-arrow svg { width: 10px; height: 10px; fill: none; stroke: #444; stroke-width: 1.500; }
.track { flex: 1; }
.thumb { width: 62%; height: 17px; background: #cdcdcd; }
```
